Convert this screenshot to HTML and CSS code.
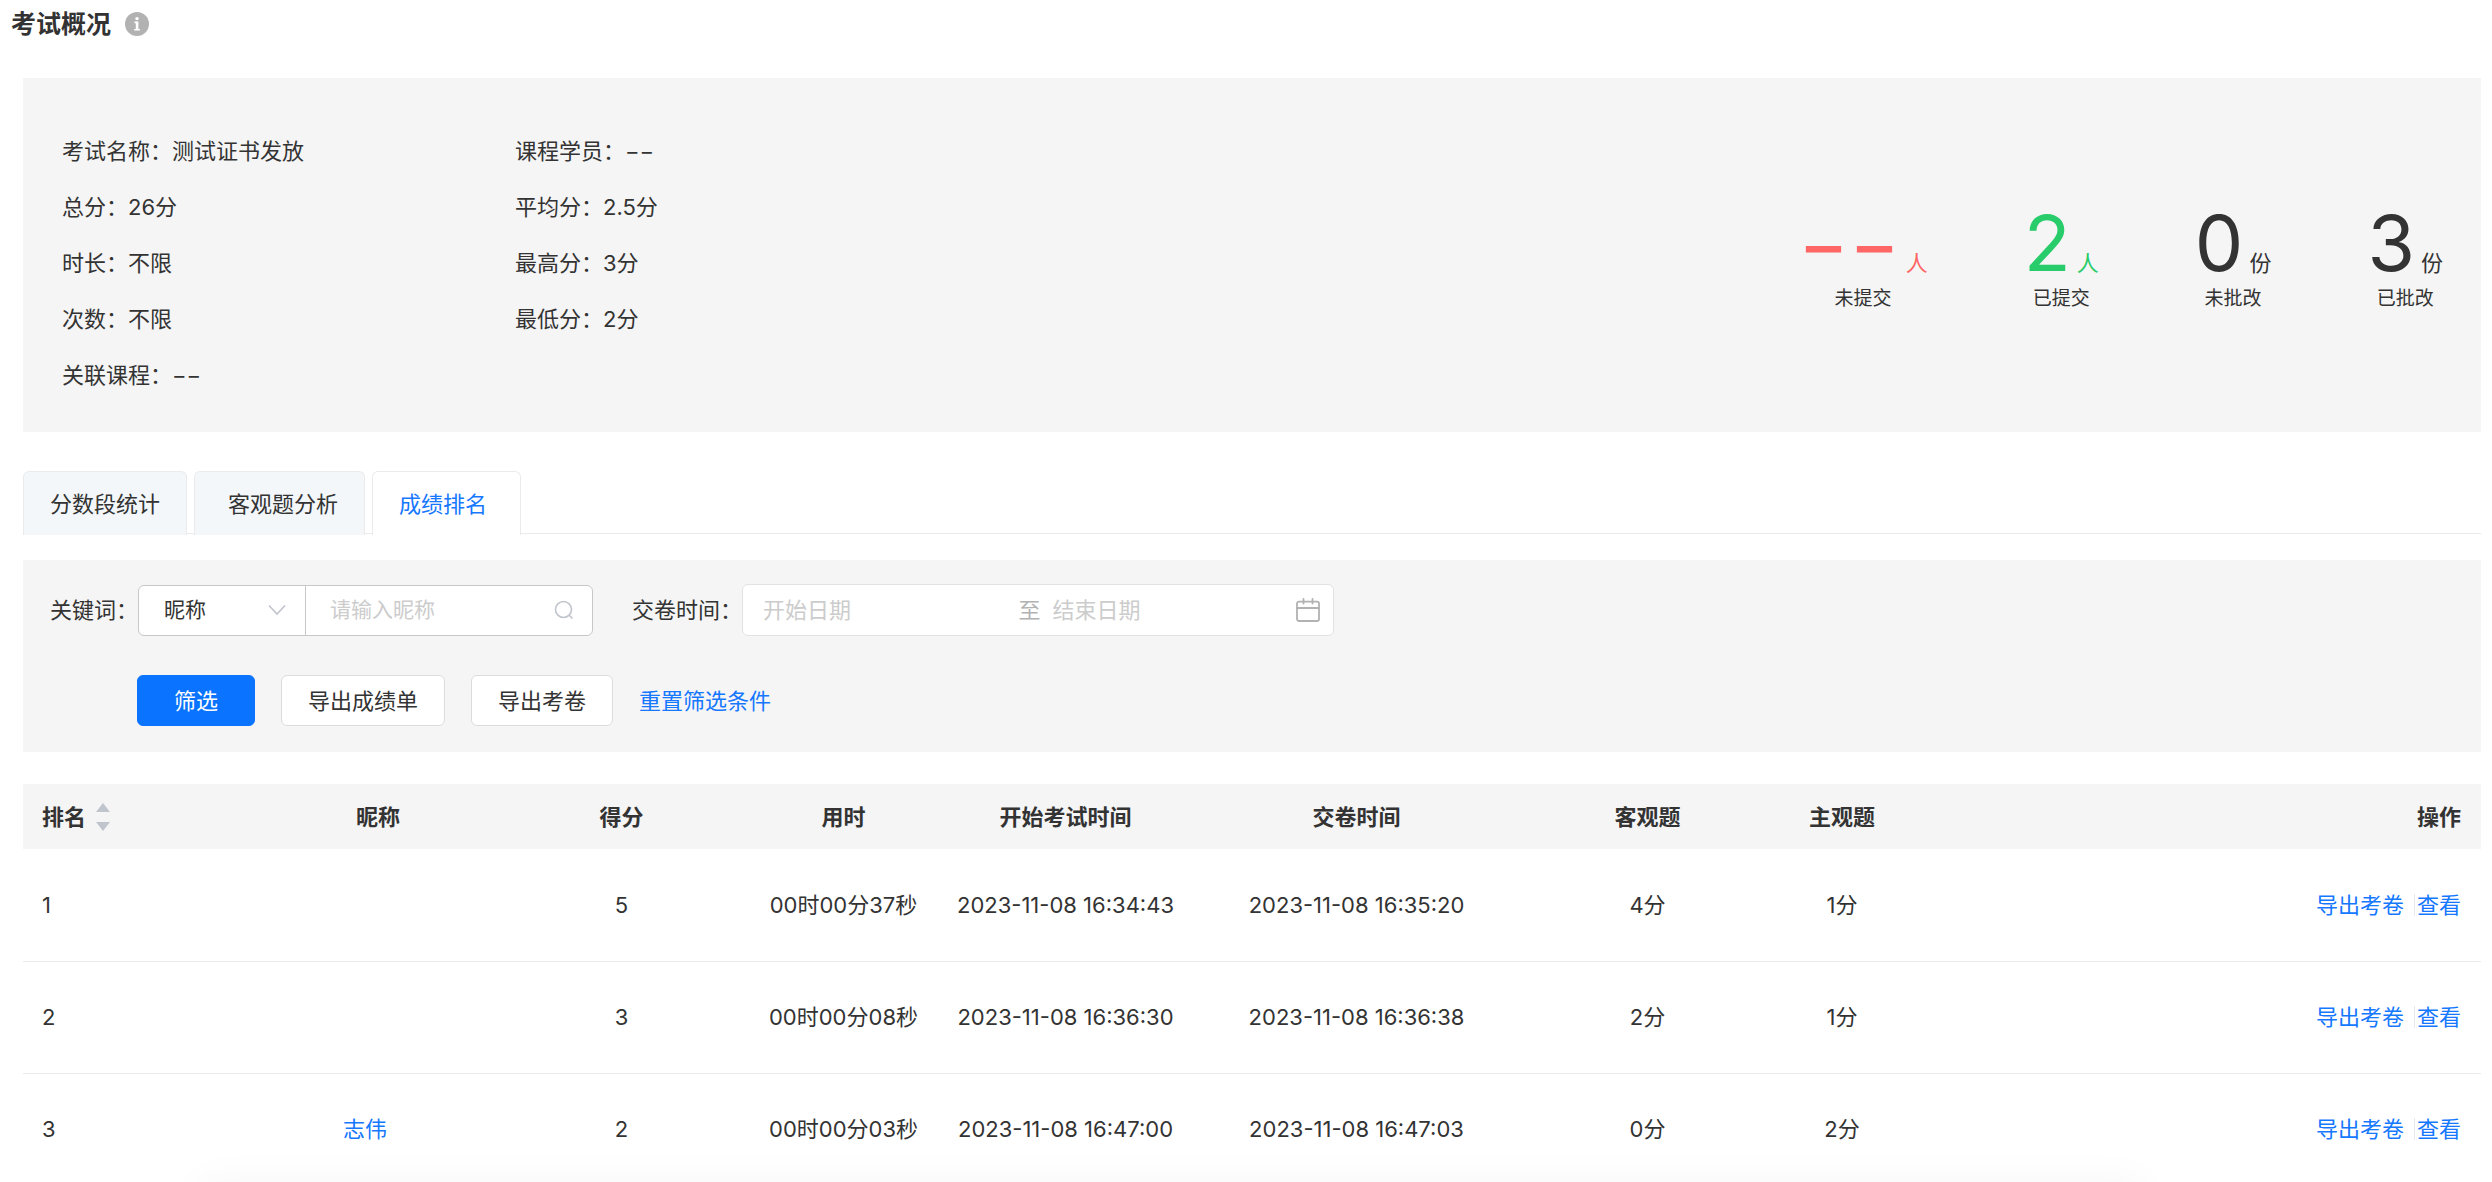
FILE: index.html
```html
<!DOCTYPE html>
<html lang="zh-CN">
<head>
  <meta charset="UTF-8">
  <meta name="viewport" content="width=device-width, initial-scale=1.0">
  <title>考试概况</title>
  <link rel="stylesheet" href="styles.css">
</head>
<body>
  <header class="page-header">
    <h1>考试概况</h1>
    <svg class="info-icon" viewBox="0 0 24 24" aria-hidden="true">
      <circle cx="12" cy="12" r="12" fill="#b2b2b2"/>
      <circle cx="12" cy="6.6" r="1.7" fill="#fff"/>
      <path d="M9.4 9.6h4v7.4h1.5v1.6H9.2V17h1.6v-5.8H9.4z" fill="#fff"/>
    </svg>
  </header>

  <main class="content">
    <!-- Exam overview -->
    <section class="overview">
      <ul class="info-list">
        <li>考试名称：测试证书发放</li>
        <li>总分：26分</li>
        <li>时长：不限</li>
        <li>次数：不限</li>
        <li>关联课程：−−</li>
      </ul>
      <ul class="info-list">
        <li>课程学员：−−</li>
        <li>平均分：2.5分</li>
        <li>最高分：3分</li>
        <li>最低分：2分</li>
      </ul>
      <div class="stats">
        <div class="stat">
          <p class="stat-value red"><span class="num">−−</span><span class="unit">人</span></p>
          <p class="stat-label">未提交</p>
        </div>
        <div class="stat">
          <p class="stat-value green"><span class="num">2</span><span class="unit">人</span></p>
          <p class="stat-label">已提交</p>
        </div>
        <div class="stat">
          <p class="stat-value"><span class="num">0</span><span class="unit">份</span></p>
          <p class="stat-label">未批改</p>
        </div>
        <div class="stat">
          <p class="stat-value"><span class="num">3</span><span class="unit">份</span></p>
          <p class="stat-label">已批改</p>
        </div>
      </div>
    </section>

    <div class="tabs" role="tablist">
      <button class="tab" role="tab" type="button">分数段统计</button>
      <button class="tab" role="tab" type="button">客观题分析</button>
      <button class="tab active" role="tab" type="button" aria-selected="true">成绩排名</button>
    </div>

    <!-- Filters -->
    <form class="filters">
      <div class="filter-row">
        <label for="keyword">关键词：</label>
        <div class="keyword-group">
          <div class="select-wrap">
            <select id="keyword-type" aria-label="关键词类型">
              <option>昵称</option>
            </select>
            <svg class="chevron" viewBox="0 0 18 12" aria-hidden="true">
              <path d="M1 1.5l8 8.5 8-8.5" fill="none" stroke="#c0c4cc" stroke-width="1.6"/>
            </svg>
          </div>
          <div class="search-wrap">
            <input id="keyword" type="text" placeholder="请输入昵称">
            <svg class="search-icon" viewBox="0 0 20 20" aria-hidden="true">
              <circle cx="9.5" cy="9.5" r="8" fill="none" stroke="#c0c4cc" stroke-width="1.6"/>
              <path d="M15.2 15.2l3.3 3.3" stroke="#c0c4cc" stroke-width="1.6"/>
            </svg>
          </div>
        </div>
        <label class="date-label" for="date-start">交卷时间：</label>
        <div class="date-range">
          <input id="date-start" type="text" placeholder="开始日期">
          <span class="date-sep">至</span>
          <input id="date-end" type="text" placeholder="结束日期" aria-label="结束日期">
          <svg class="calendar-icon" viewBox="0 0 24 24" aria-hidden="true">
            <g fill="none" stroke="#b2b2b2" stroke-width="1.8" stroke-linecap="round">
              <rect x="1" y="3.6" width="22" height="19.4" rx="2"/>
              <path d="M1 10h22M7.5 1v4.6M16.5 1v4.6"/>
            </g>
          </svg>
        </div>
      </div>
      <div class="filter-actions">
        <button class="btn btn-primary" type="button">筛选</button>
        <button class="btn" type="button">导出成绩单</button>
        <button class="btn" type="button">导出考卷</button>
        <a href="#">重置筛选条件</a>
      </div>
    </form>

    <table class="rank-table">
      <colgroup>
        <col class="col-rank">
        <col class="col-name">
        <col class="col-wide">
        <col class="col-used">
        <col class="col-wide">
        <col class="col-wide">
        <col class="col-wide">
        <col class="col-subjective">
        <col>
      </colgroup>
      <thead>
        <tr>
          <th class="left">
            <span class="sortable">排名
              <svg class="sort-icon" viewBox="0 0 14 28" aria-hidden="true">
                <path d="M7 0l7 9H0zM7 28l7-9H0z" fill="#c0c4cc"/>
              </svg>
            </span>
          </th>
          <th>昵称</th>
          <th>得分</th>
          <th>用时</th>
          <th>开始考试时间</th>
          <th>交卷时间</th>
          <th>客观题</th>
          <th>主观题</th>
          <th class="right">操作</th>
        </tr>
      </thead>
      <tbody>
        <tr>
          <td class="left">1</td>
          <td class="name"></td>
          <td>5</td>
          <td>00时00分37秒</td>
          <td>2023-11-08 16:34:43</td>
          <td>2023-11-08 16:35:20</td>
          <td>4分</td>
          <td>1分</td>
          <td class="right"><span class="actions"><a href="#">导出考卷</a><a href="#">查看</a></span></td>
        </tr>
        <tr>
          <td class="left">2</td>
          <td class="name"></td>
          <td>3</td>
          <td>00时00分08秒</td>
          <td>2023-11-08 16:36:30</td>
          <td>2023-11-08 16:36:38</td>
          <td>2分</td>
          <td>1分</td>
          <td class="right"><span class="actions"><a href="#">导出考卷</a><a href="#">查看</a></span></td>
        </tr>
        <tr>
          <td class="left">3</td>
          <td class="name"><a href="#">志伟</a></td>
          <td>2</td>
          <td>00时00分03秒</td>
          <td>2023-11-08 16:47:00</td>
          <td>2023-11-08 16:47:03</td>
          <td>0分</td>
          <td>2分</td>
          <td class="right"><span class="actions"><a href="#">导出考卷</a><a href="#">查看</a></span></td>
        </tr>
      </tbody>
    </table>
  </main>

  <div class="bottom-shadow"></div>
</body>
</html>
```
FILE: styles.css
```css
:root {
  --text: #333;
  --primary: #0a73ff;
  --link: #1677ff;
  --panel: #f5f5f5;
  --border: #ebebeb;
  --placeholder: #ccc;
  --radius: 6px;
}

* {
  margin: 0;
  padding: 0;
  box-sizing: border-box;
}

body {
  height: 100vh;
  overflow: hidden;
  background-color: #fff;
  color: var(--text);
  font-family: Inter, "Noto Sans CJK SC", sans-serif;
  font-size: 22px;
  line-height: 32px;
}

button,
input,
select {
  font: inherit;
  color: inherit;
}

a {
  color: var(--link);
  text-decoration: none;
}

ul {
  list-style: none;
}

.page-header {
  display: flex;
  align-items: center;
  gap: 14px;
  height: 48px;
  padding-left: 11px;
}

h1 {
  font-size: 25px;
  font-weight: 600;
}

.info-icon {
  width: 24px;
  height: 24px;
}

.content {
  padding: 30px 11px 0 23px;
}

/* Overview */
.overview {
  display: flex;
  padding: 45px 38px 29px 39px;
  background-color: var(--panel);
}

.info-list {
  width: 453px;
  line-height: 56px;
}

.stats {
  display: flex;
  align-items: flex-start;
  gap: 96px;
  margin-left: auto;
  padding-top: 80px;
}

.stat {
  text-align: center;
}

.stat-value {
  display: flex;
  align-items: baseline;
  gap: 6px;
  line-height: 80px;
}

.num {
  font-size: 77px;
  font-weight: 400;
}

.unit {
  line-height: 24px;
}

.stat-label {
  margin-top: 2px;
  font-size: 19px;
  line-height: 28px;
}

.red {
  color: #ff6666;
}

.green {
  color: #29cc6a;
}

/* Tabs */
.tabs {
  display: flex;
  align-items: flex-start;
  gap: 7px;
  height: 63px;
  margin-top: 39px;
  border-bottom: 1px solid var(--border);
}

.tab {
  height: 64px;
  padding: 0 26px;
  border: 1px solid var(--border);
  border-bottom: none;
  border-radius: var(--radius) var(--radius) 0 0;
  background-color: #f3f7fa;
  cursor: pointer;
}

.tab:nth-child(2) {
  padding-left: 33px;
}

.tab.active {
  padding-right: 33px;
  background-color: #fff;
  color: var(--link);
}

/* Filters */
.filters {
  margin-top: 26px;
  padding: 24px 27px 26px;
  background-color: var(--panel);
}

.filter-row {
  display: flex;
  align-items: center;
}

.keyword-group {
  display: flex;
  width: 455px;
  height: 51px;
  border: 1px solid #c8c8c8;
  border-radius: var(--radius);
  background-color: #fff;
  font-size: 21px;
}

.select-wrap {
  display: flex;
  flex: none;
  align-items: center;
  width: 167px;
  border-right: 1px solid #c8c8c8;
}

.select-wrap select {
  flex: 1;
  height: 100%;
  padding-left: 25px;
  border: none;
  outline: none;
  appearance: none;
  background: none;
}

.chevron {
  width: 18px;
  height: 12px;
  margin-right: 19px;
}

.search-wrap {
  display: flex;
  flex: 1;
  align-items: center;
  min-width: 0;
}

.search-wrap input {
  flex: 1;
  min-width: 0;
  padding-left: 24px;
  border: none;
  outline: none;
  background: none;
}

.search-icon {
  width: 20px;
  height: 20px;
  margin-right: 18px;
}

::placeholder {
  color: var(--placeholder);
  opacity: 1;
}

.date-label {
  margin-left: 39px;
}

.date-range {
  display: flex;
  align-items: center;
  width: 592px;
  height: 52px;
  padding: 0 13px 0 20px;
  border: 1px solid #e2e2e2;
  border-radius: var(--radius);
  background-color: #fff;
}

.date-range input {
  flex: 1;
  min-width: 0;
  border: none;
  outline: none;
  background: none;
}

.date-sep {
  margin: 0 12px;
  color: #b2b2b2;
}

.calendar-icon {
  width: 24px;
  height: 24px;
}

.filter-actions {
  display: flex;
  align-items: center;
  gap: 26px;
  margin-top: 39px;
  padding-left: 87px;
}

.btn {
  height: 51px;
  padding: 0 26px;
  border: 1px solid #dcdcdc;
  border-radius: var(--radius);
  background-color: #fff;
  cursor: pointer;
}

.btn-primary {
  padding: 0 36px;
  border-color: var(--primary);
  background-color: var(--primary);
  color: #fff;
}

/* Ranking table */
.rank-table {
  width: 100%;
  margin-top: 32px;
  border-collapse: collapse;
  table-layout: fixed;
  text-align: center;
}

.col-rank {
  width: 257px;
}

.col-name {
  width: 196px;
}

.col-wide {
  width: 291px;
}

.col-used {
  width: 153px;
}

.col-subjective {
  width: 98px;
}

.rank-table th {
  height: 65px;
  background-color: var(--panel);
  font-weight: 600;
}

.rank-table td {
  height: 112px;
  border-bottom: 1px solid var(--border);
  white-space: nowrap;
}

.rank-table .left {
  padding-left: 19px;
  text-align: left;
}

.rank-table .right {
  padding-right: 20px;
  text-align: right;
}

.rank-table .name {
  padding-right: 26px;
}

.sortable {
  display: flex;
  align-items: center;
  gap: 10px;
}

.sort-icon {
  width: 14px;
  height: 28px;
}

.actions {
  display: inline-flex;
  line-height: 22px;
}

.actions a + a {
  margin-left: 10px;
  padding-left: 2px;
  border-left: 1px solid #e4eaf2;
}

/* Shadow of the bar below the fold */
.bottom-shadow {
  position: fixed;
  right: 14%;
  bottom: -40px;
  left: 8%;
  height: 40px;
  box-shadow: 0 0 40px rgba(0, 0, 0, 0.04);
}
```
